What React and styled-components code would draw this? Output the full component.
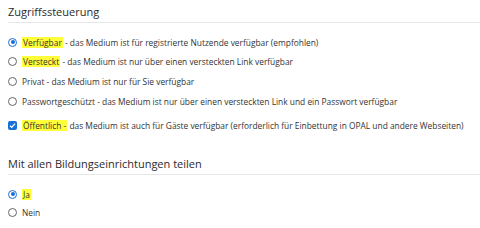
import React from "react";
import styled, { createGlobalStyle } from "styled-components";

const Global = createGlobalStyle`
  html, body { margin: 0; padding: 0; background: #fff; }
  body { font-family: "Open Sans", "Liberation Sans", sans-serif; color: #333; }
`;

const Page = styled.div`
  padding: 5px 0 0 8px;
  display: flex;
  flex-direction: column;
`;

const Section = styled.section`
  display: flex;
  flex-direction: column;
  margin-bottom: ${(p) => p.$mb || 0}px;
`;

const Heading = styled.h2`
  margin: 0;
  font-size: 11px;
  font-weight: 400;
  line-height: 14px;
  color: #2b2b2b;
  padding-bottom: 3px;
  border-bottom: 1px solid #e6e6e6;
`;

const Options = styled.div`
  display: flex;
  flex-direction: column;
  padding-top: ${(p) => p.$pt}px;
  gap: ${(p) => p.$gap}px;
`;

const Row = styled.label`
  display: flex;
  align-items: center;
  gap: 5px;
  font-size: 8.4px;
  line-height: 11px;
  color: #333;
  margin-top: ${(p) => p.$mt || 0}px;
`;

const Radio = styled.span`
  width: 9px;
  height: 9px;
  box-sizing: border-box;
  border-radius: 50%;
  border: 1px solid ${(p) => (p.$on ? "#1a6fd6" : "#666")};
  display: flex;
  align-items: center;
  justify-content: center;
  flex: none;
  &::after {
    content: "";
    width: 4px;
    height: 4px;
    border-radius: 50%;
    background: ${(p) => (p.$on ? "#1a6fd6" : "transparent")};
  }
`;

const Check = styled.span`
  width: 9px;
  height: 9px;
  border-radius: 2px;
  background: #1a6fd6;
  display: flex;
  align-items: center;
  justify-content: center;
  flex: none;
`;

const Mark = styled.mark`
  background: #ffff3a;
  color: #333;
  padding: 0 1px;
`;

const options1 = [
  { on: true, mark: "Verfügbar", rest: " - das Medium ist für registrierte Nutzende verfügbar (empfohlen)" },
  { on: false, mark: "Versteckt", rest: " - das Medium ist nur über einen versteckten Link verfügbar" },
  { on: false, text: "Privat - das Medium ist nur für Sie verfügbar" },
  { on: false, text: "Passwortgeschützt - das Medium ist nur über einen versteckten Link und ein Passwort verfügbar" },
];

export default function App() {
  return (
    <>
      <Global />
      <Page>
        <Section $mb={26}>
          <Heading>Zugriffssteuerung</Heading>
          <Options $pt={13.5} $gap={8.7}>
            {options1.map((o, i) => (
              <Row key={i}>
                <Radio $on={o.on} />
                <span>
                  {o.mark ? <Mark>{o.mark}</Mark> : null}
                  {o.mark ? o.rest : o.text}
                </span>
              </Row>
            ))}
            <Row $mt={4.3}>
              <Check>
                <svg width="7" height="7" viewBox="0 0 8 8">
                  <path d="M1.2 4.2 L3.1 6.1 L6.9 1.9" fill="none" stroke="#fff" strokeWidth="1.5" />
                </svg>
              </Check>
              <span>
                <Mark>Öffentlich -</Mark> das Medium ist auch für Gäste verfügbar (erforderlich für Einbettung in OPAL und andere Webseiten)
              </span>
            </Row>
          </Options>
        </Section>
        <Section>
          <Heading>Mit allen Bildungseinrichtungen teilen</Heading>
          <Options $pt={14} $gap={7.5}>
            <Row>
              <Radio $on />
              <span><Mark>Ja</Mark></span>
            </Row>
            <Row>
              <Radio />
              <span>Nein</span>
            </Row>
          </Options>
        </Section>
      </Page>
    </>
  );
}
